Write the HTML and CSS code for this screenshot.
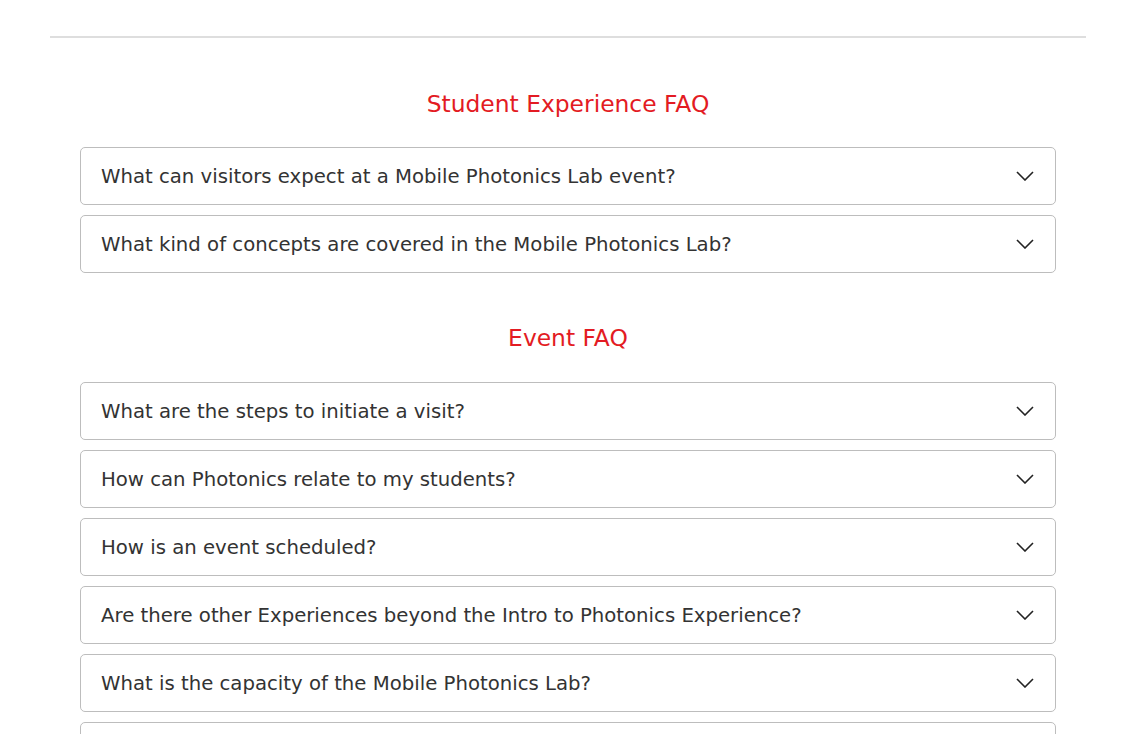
FILE: index.html
```html
<!DOCTYPE html>
<html lang="en">
<head>
<meta charset="utf-8">
<title>FAQ</title>
<link rel="stylesheet" href="styles.css">
</head>
<body>
<div class="page">
  <hr class="rule">
  <section class="faq">
    <h2 class="faq-title">Student Experience FAQ</h2>
    <div class="faq-list">
      <div class="faq-item"><span class="q">What can visitors expect at a Mobile Photonics Lab event?</span><svg class="chev" viewBox="0 0 18 10" width="18" height="10"><path d="M1 1 L9 9 L17 1" fill="none" stroke="#222" stroke-width="1.6"/></svg></div>
      <div class="faq-item"><span class="q">What kind of concepts are covered in the Mobile Photonics Lab?</span><svg class="chev" viewBox="0 0 18 10" width="18" height="10"><path d="M1 1 L9 9 L17 1" fill="none" stroke="#222" stroke-width="1.6"/></svg></div>
    </div>
  </section>
  <section class="faq">
    <h2 class="faq-title">Event FAQ</h2>
    <div class="faq-list">
      <div class="faq-item"><span class="q">What are the steps to initiate a visit?</span><svg class="chev" viewBox="0 0 18 10" width="18" height="10"><path d="M1 1 L9 9 L17 1" fill="none" stroke="#222" stroke-width="1.6"/></svg></div>
      <div class="faq-item"><span class="q">How can Photonics relate to my students?</span><svg class="chev" viewBox="0 0 18 10" width="18" height="10"><path d="M1 1 L9 9 L17 1" fill="none" stroke="#222" stroke-width="1.6"/></svg></div>
      <div class="faq-item"><span class="q">How is an event scheduled?</span><svg class="chev" viewBox="0 0 18 10" width="18" height="10"><path d="M1 1 L9 9 L17 1" fill="none" stroke="#222" stroke-width="1.6"/></svg></div>
      <div class="faq-item"><span class="q">Are there other Experiences beyond the Intro to Photonics Experience?</span><svg class="chev" viewBox="0 0 18 10" width="18" height="10"><path d="M1 1 L9 9 L17 1" fill="none" stroke="#222" stroke-width="1.6"/></svg></div>
      <div class="faq-item"><span class="q">What is the capacity of the Mobile Photonics Lab?</span><svg class="chev" viewBox="0 0 18 10" width="18" height="10"><path d="M1 1 L9 9 L17 1" fill="none" stroke="#222" stroke-width="1.6"/></svg></div>
      <div class="faq-item"><span class="q">Is there a cost for a Mobile Photonics Lab visit?</span><svg class="chev" viewBox="0 0 18 10" width="18" height="10"><path d="M1 1 L9 9 L17 1" fill="none" stroke="#222" stroke-width="1.6"/></svg></div>
    </div>
  </section>
</div>
</body>
</html>
```
FILE: styles.css
```css
html, body {
  margin: 0;
  padding: 0;
  background: #fff;
}
body {
  font-family: "DejaVu Sans", "Liberation Sans", sans-serif;
  color: #333;
  overflow: hidden;
}
.page {
  margin: 0 37px 0 50px;
  padding-top: 36px;
}
.rule {
  margin: 0;
  border: none;
  height: 2px;
  background: #dedede;
}
.faq {
  padding: 0 30px;
}
.faq-title {
  margin: 0;
  text-align: center;
  color: #e31b23;
  font-weight: normal;
  font-size: 23.4px;
  line-height: 30px;
}
.faq:first-of-type .faq-title {
  padding-top: 51px;
  padding-bottom: 28px;
}
.faq + .faq .faq-title {
  padding-top: 50px;
  padding-bottom: 29px;
}
.faq-list {
  display: flex;
  flex-direction: column;
  gap: 10px;
}
.faq-item {
  display: flex;
  align-items: center;
  justify-content: space-between;
  height: 56px;
  border: 1px solid #bdbdbd;
  border-radius: 5px;
  padding: 0 21px 0 20px;
  font-size: 19.7px;
}
.q {
  line-height: 24px;
  padding-top: 2px;
}
.chev {
  display: block;
  flex: none;
  margin-top: -1px;
}
```
